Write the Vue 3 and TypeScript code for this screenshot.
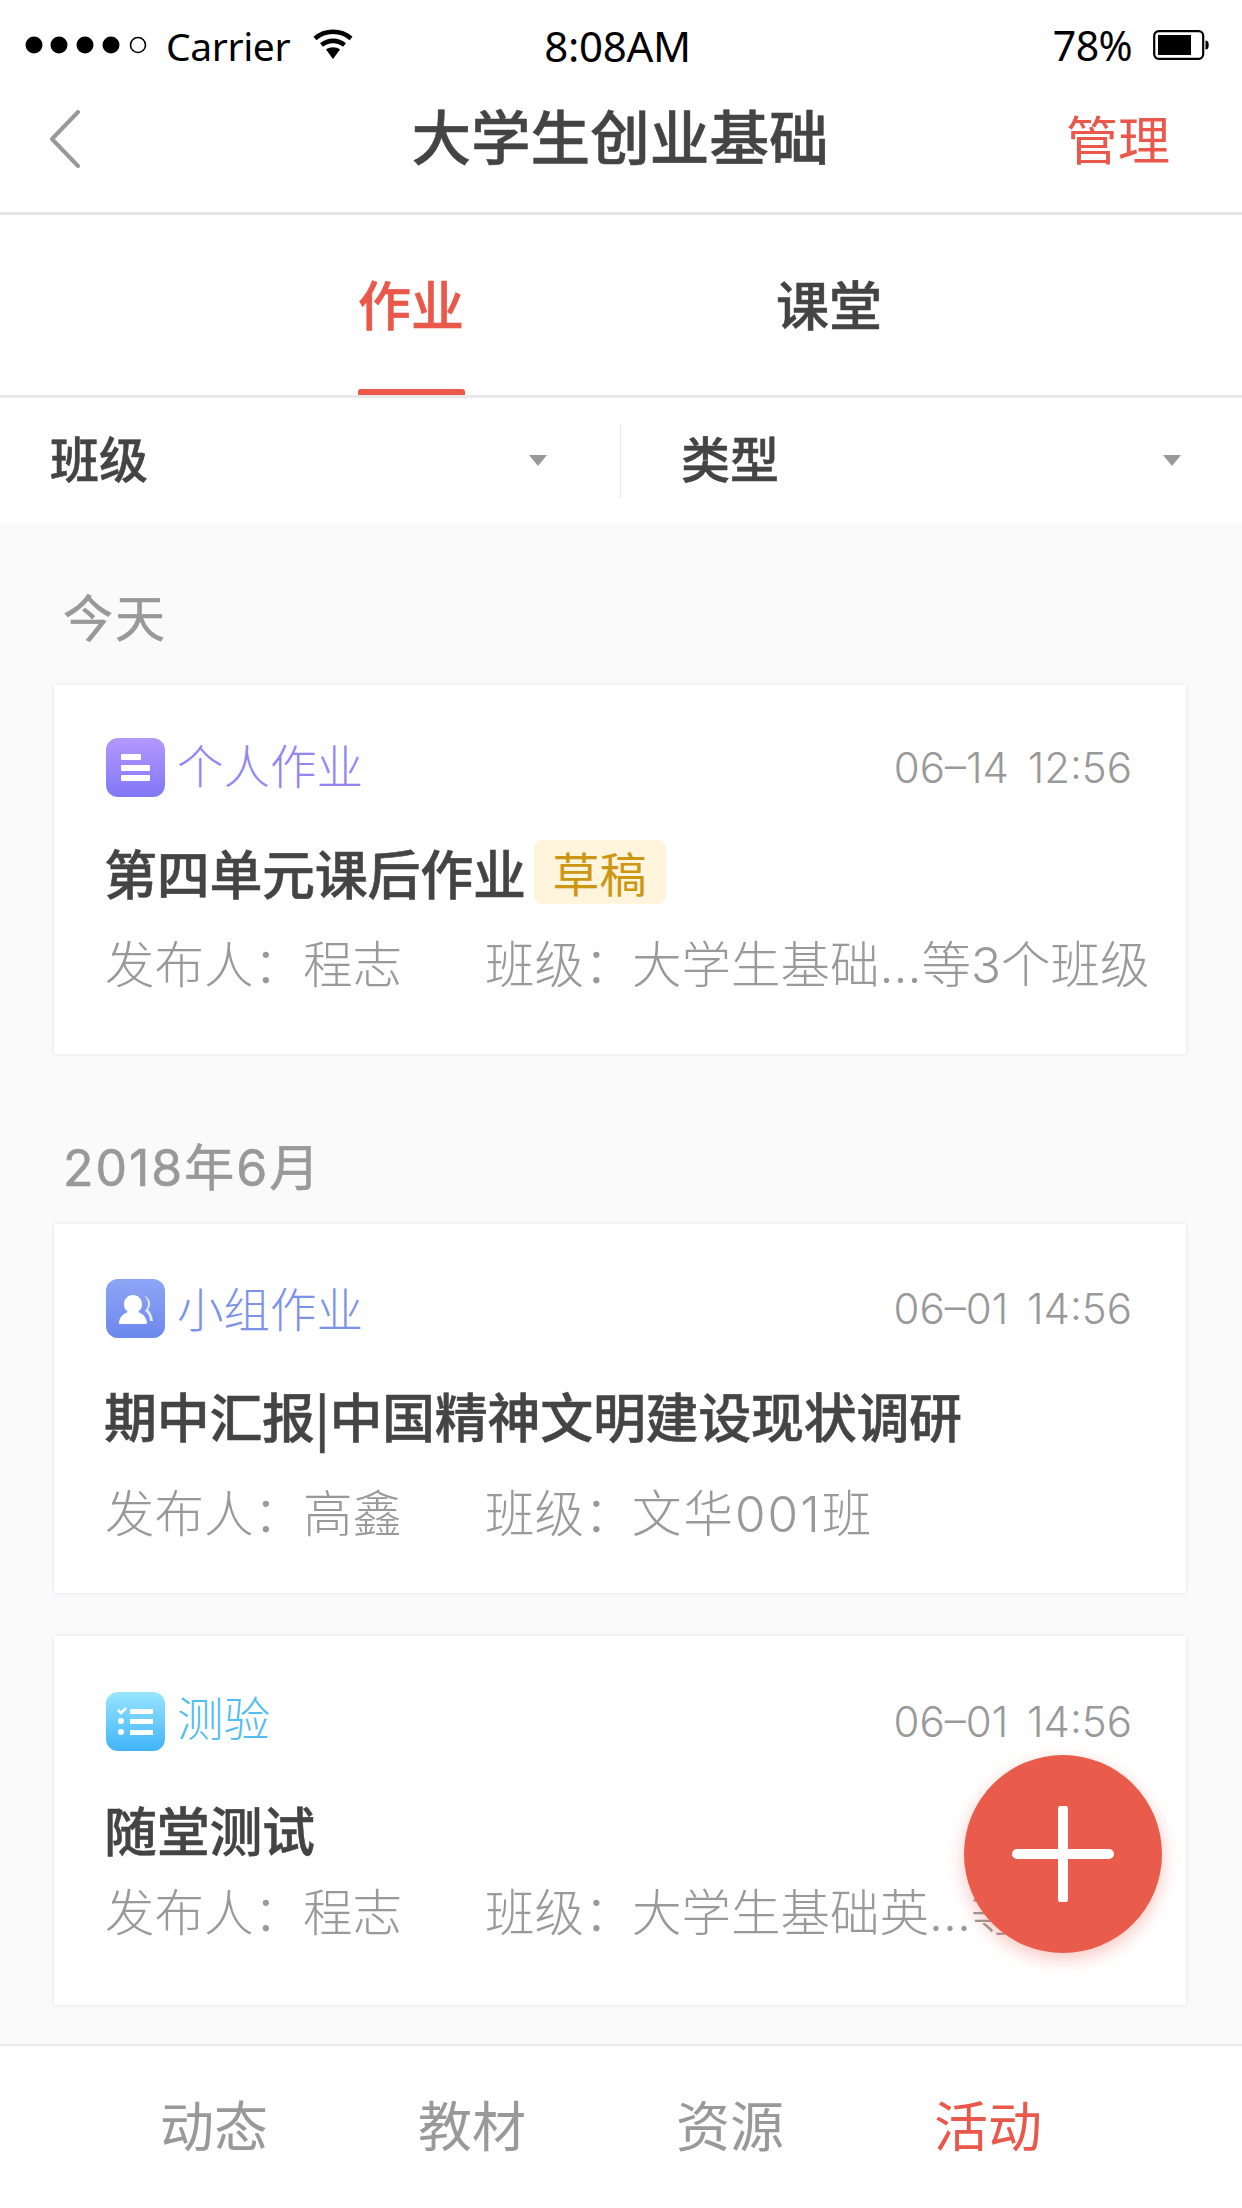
<script setup lang="ts">
interface Card {
  id: string
  kind: 'solo' | 'group' | 'quiz'
  type: string
  time: string
  title: string
  tag?: string
  person: string
  cls: string
  layout: string
}
const sections: { label: string; cls: string; cards: Card[] }[] = [
  {
    label: '今天',
    cls: 'sec-today',
    cards: [
      { id: 'a', kind: 'solo', type: '个人作业', time: '06–14 12:56', title: '第四单元课后作业', tag: '草稿', person: '程志', cls: '大学生基础...等3个班级', layout: 'l1' },
    ],
  },
  {
    label: '2018年6月',
    cls: 'sec-month',
    cards: [
      { id: 'b', kind: 'group', type: '小组作业', time: '06–01 14:56', title: '期中汇报|中国精神文明建设现状调研', person: '高鑫', cls: '文华001班', layout: 'l2' },
      { id: 'c', kind: 'quiz', type: '测验', time: '06–01 14:56', title: '随堂测试', person: '程志', cls: '大学生基础英...等', layout: 'l3' },
    ],
  },
]
const bottomTabs = ['动态', '教材', '资源', '活动']
</script>

<template>
  <div class="page">
    <div class="status">
      <div class="st-left">
        <svg class="dots" width="124" height="20" viewBox="0 0 124 20">
          <circle cx="9" cy="10" r="8.5" fill="#000" />
          <circle cx="34" cy="10" r="8.5" fill="#000" />
          <circle cx="60" cy="10" r="8.5" fill="#000" />
          <circle cx="86" cy="10" r="8.5" fill="#000" />
          <circle cx="113" cy="10" r="7.5" fill="none" stroke="#000" stroke-width="1.6" />
        </svg>
        <span class="carrier">Carrier</span>
        <svg class="wifi" width="40" height="32" viewBox="0 0 40 32">
          <path d="M2 10.5C12 1.5 28 1.5 38 10.5" fill="none" stroke="#000" stroke-width="4.6" />
          <path d="M8.5 17C15 11.5 25 11.5 31.500 17" fill="none" stroke="#000" stroke-width="4.6" />
          <path d="M13 21.500C17 18.500 23 18.500 27 21.500L20 31Z" fill="#000" />
        </svg>
      </div>
      <span class="st-time">8:08AM</span>
      <div class="st-right">
        <span class="pct">78%</span>
        <svg width="56" height="30" viewBox="0 0 56 30">
          <rect x="1.200" y="1.200" width="49" height="27.600" rx="4.500" fill="none" stroke="#000" stroke-width="2.200" />
          <rect x="5" y="5" width="33" height="20" fill="#000" />
          <path d="M52.500 10.500c2.400 0 3.200 1.500 3.200 4.500s-.8 4.500-3.200 4.500z" fill="#000" />
        </svg>
      </div>
    </div>

    <header class="nav">
      <svg class="back" width="34" height="58" viewBox="0 0 34 58">
        <path d="M30 2L4 29L30 56" fill="none" stroke="#999" stroke-width="4" stroke-linecap="round" stroke-linejoin="round" />
      </svg>
      <h1 class="nav-title">大学生创业基础</h1>
      <span class="manage">管理</span>
    </header>

    <nav class="tabs">
      <span class="tab tab-on">作业</span>
      <span class="tab">课堂</span>
    </nav>

    <div class="filters">
      <div class="filter f-left">
        <span class="f-text">班级</span>
        <i class="caret"></i>
      </div>
      <div class="filter f-right">
        <span class="f-text">类型</span>
        <i class="caret"></i>
      </div>
    </div>

    <main class="content">
      <section v-for="s in sections" :key="s.label" :class="s.cls">
        <h2 class="sec-label">{{ s.label }}</h2>
        <article v-for="c in s.cards" :key="c.id" class="card" :class="c.layout">
          <div class="row-top">
            <span class="ico" :class="'ico-' + c.kind">
              <svg v-if="c.kind === 'solo'" width="59" height="59" viewBox="0 0 59 59">
                <rect x="15" y="16" width="20" height="6" rx="1" fill="#fff" />
                <rect x="15" y="27" width="29" height="6" rx="1" fill="#fff" />
                <rect x="15" y="37" width="29" height="6" rx="1" fill="#fff" />
              </svg>
              <svg v-else-if="c.kind === 'group'" width="59" height="59" viewBox="0 0 59 59">
                <path d="M13 45c0-7 4-10 9-12-3-2-4-5-4-8 0-5 4-9 9-9s9 4 9 9c0 3-1 6-4 8 5 2 9 5 9 12z" fill="#fff" />
                <path d="M38 17c4 1 6 4 6 8 0 2-1 4-2 6 3 2 4 6 5 11h-3c0-4-2-8-5-10 2-2 3-5 3-7 0-3-1-6-4-8z" fill="#fff" opacity=".8" />
              </svg>
              <svg v-else width="59" height="59" viewBox="0 0 59 59">
                <path d="M12 18l3 3 5-5" fill="none" stroke="#fff" stroke-width="2.500" />
                <rect x="24" y="17" width="23" height="5" fill="#fff" />
                <circle cx="15" cy="29" r="3" fill="#fff" />
                <rect x="24" y="27" width="23" height="5" fill="#fff" />
                <circle cx="15" cy="40" r="3" fill="#fff" />
                <rect x="24" y="38" width="23" height="5" fill="#fff" />
              </svg>
            </span>
            <span class="type" :class="'type-' + c.kind">{{ c.type }}</span>
            <span class="time">{{ c.time }}</span>
          </div>
          <div class="row-title">
            <span class="title">{{ c.title }}</span>
            <span v-if="c.tag" class="tag">{{ c.tag }}</span>
          </div>
          <div class="row-meta">
            <span class="k1">发布人：</span><span class="v1">{{ c.person }}</span>
            <span class="k2">班级：</span><span class="v2">{{ c.cls }}</span>
          </div>
        </article>
      </section>
    </main>

    <footer class="bottom">
      <span v-for="(t, i) in bottomTabs" :key="t" class="b-tab" :class="{ 'b-on': i === 3 }">{{ t }}</span>
    </footer>

    <button class="fab" type="button" aria-label="add">
      <svg width="102" height="96" viewBox="0 0 102 96">
        <path d="M51 3V93M5 48H97" stroke="#fff" stroke-width="10" stroke-linecap="round" fill="none" />
      </svg>
    </button>
  </div>
</template>

<style>
html, body { margin: 0; background: #fff; }
</style>

<style scoped>
.page {
  position: relative;
  width: 1242px;
  height: 2208px;
  overflow: hidden;
  background: #fff;
  display: flex;
  flex-direction: column;
  font-family: "Noto Sans CJK SC", "Noto Sans", sans-serif;
  color: #444;
}
.status {
  height: 92px;
  flex: none;
  display: grid;
  grid-template-columns: 1fr auto 1fr;
  align-items: center;
  padding: 0 33px 2px 25px;
  box-sizing: border-box;
  font-family: "Noto Sans", sans-serif;
  color: #000;
}
.st-left { display: flex; align-items: center; }
.carrier { margin-left: 17px; font-size: 39px; letter-spacing: -.4px; }
.wifi { margin-left: 23px; margin-top: -2px; }
.st-time { font-size: 42px; letter-spacing: -.3px; margin-left: 1px; }
.st-right { display: flex; justify-content: flex-end; align-items: center; gap: 21px; }
.pct { font-size: 41px; letter-spacing: -.6px; }
.nav {
  height: 123px;
  flex: none;
  box-sizing: border-box;
  border-bottom: 3px solid #e6e6ea;
  display: grid;
  grid-template-columns: 1fr auto 1fr;
  align-items: center;
  padding: 0 48px 29px;
}
.back { justify-self: start; margin-top: 2px; }
.nav-title {
  margin: 0 2px 6px 0;
  font-size: 59.6px;
  font-weight: 500;
  -webkit-text-stroke: .5px #444;
  line-height: 1.2;
  color: #444;
}
.manage { justify-self: end; margin-right: 24px; font-size: 52px; color: #e9584a; }
.tabs {
  height: 183px;
  flex: none;
  box-sizing: border-box;
  border-bottom: 3px solid #e9e9ec;
  display: flex;
  padding-left: 358px;
  gap: 312px;
}
.tab {
  position: relative;
  width: 106px;
  text-align: center;
  font-size: 53px;
  font-weight: 500;
  -webkit-text-stroke: .5px currentColor;
  line-height: 176px;
  color: #444;
}
.tab-on { color: #e9584a; }
.tab-on::after {
  content: "";
  position: absolute;
  left: 0;
  right: -1px;
  top: 174px;
  height: 6px;
  border-radius: 3px 3px 0 0;
  background: #ed5a4c;
}
.filters {
  height: 126px;
  flex: none;
  display: flex;
  align-items: center;
  font-size: 49px;
  font-weight: 500;
  -webkit-text-stroke: .5px #444;
  line-height: 1;
  color: #444;
}
.filter { display: flex; align-items: center; justify-content: space-between; box-sizing: border-box; }
.f-text { margin-bottom: 10px; }
.f-left {
  width: 621px;
  height: 74px;
  padding: 0 73px 0 50px;
  border-right: 1px solid #e8e8ea;
}
.f-right { width: 621px; padding: 0 61px 0 60px; }
.caret {
  width: 0;
  height: 0;
  margin-bottom: 2px;
  border-left: 9px solid transparent;
  border-right: 9px solid transparent;
  border-top: 11px solid #999;
}
.content {
  flex: 1;
  min-height: 0;
  background: #fafafb;
  padding: 0 56px 0 54px;
  overflow: hidden;
}
.sec-label {
  margin: 0;
  padding-left: 9px;
  font-family: "Inter", "Noto Sans CJK SC", sans-serif;
  font-size: 50px;
  font-weight: 400;
  -webkit-text-stroke: .6px #999;
  letter-spacing: 2px;
  color: #999;
  line-height: 70px;
}
.sec-today .sec-label { padding-top: 60px; padding-bottom: 31px; }
.sec-month .sec-label { padding-top: 79px; padding-bottom: 21px; }
.card {
  box-sizing: border-box;
  height: 369px;
  background: #fff;
  box-shadow: 0 0 3px rgba(215, 215, 230, .75);
  padding-left: 52px;
}
.card + .card { margin-top: 43px; }
.row-top { display: flex; align-items: center; height: 59px; }
.ico { width: 59px; height: 59px; border-radius: 12px; display: block; flex: none; margin-right: 12px; }
.ico svg { display: block; }
.ico-solo { background: linear-gradient(#b598ff, #7f78f5); }
.ico-group { background: linear-gradient(#8ea6f5, #6c87ee); }
.ico-quiz { background: linear-gradient(#97e5ff, #41b4f8); }
.type { font-size: 46.5px; line-height: 59px; font-weight: 300; }
.type-solo { color: #9287f2; margin-top: -8px; }
.type-group { color: #7c93ea; margin-top: -5px; }
.type-quiz { color: #52bdf0; margin-top: -13px; }
.time {
  margin-left: auto;
  margin-right: 54px;
  font-family: "Inter", sans-serif;
  font-weight: 300;
  font-size: 42px;
  word-spacing: 7px;
  color: #999;
}
.row-title { display: flex; align-items: center; height: 64px; margin-left: -2px; }
.title {
  font-size: 53px;
  font-weight: 500;
  letter-spacing: -.3px;
  -webkit-text-stroke: .5px #444;
  color: #444;
  white-space: nowrap;
  line-height: 64px;
}
.tag {
  margin-left: 8px;
  width: 132px;
  height: 64px;
  border-radius: 8px;
  background: #fff4dc;
  color: #cc9712;
  font-size: 47px;
  line-height: 64px;
  text-align: center;
}
.row-meta {
  font-family: "Inter", "Noto Sans CJK SC", sans-serif;
  font-size: 49.5px;
  font-weight: 300;
  line-height: 64px;
  color: #999;
  white-space: nowrap;
  display: flex;
  margin-left: -1px;
}
.k1 { width: 198px; }
.v1 { width: 182px; }
.k2 { width: 147px; }
.l1 { padding-top: 53px; }
.l1 .row-title { margin-top: 43px; }
.l1 .row-meta { margin-top: 29px; }
.l2 { padding-top: 55px; }
.l2 .row-title { margin-top: 45px; }
.l2 .row-meta { margin-top: 35px; }
.l2 .v2 { letter-spacing: 2px; }
.l3 { padding-top: 56px; }
.l3 .row-title { margin-top: 46px; }
.l3 .row-meta { margin-top: 20px; }
.bottom {
  height: 164px;
  flex: none;
  box-sizing: border-box;
  border-top: 2px solid #e9e9ec;
  padding: 0 125px 0 85px;
  display: grid;
  grid-template-columns: repeat(4, 258px);
  align-items: center;
  background: #fff;
}
.b-tab { text-align: center; font-size: 54px; color: #999; padding-bottom: 8px; }
.b-on { color: #e9584a; }
.fab {
  position: absolute;
  left: 964px;
  top: 1755px;
  width: 198px;
  height: 198px;
  border: 0;
  padding: 0;
  border-radius: 50%;
  background: #e95b4a;
  box-shadow: 0 6px 18px rgba(233, 91, 74, .35);
  display: flex;
  align-items: center;
  justify-content: center;
}
</style>
